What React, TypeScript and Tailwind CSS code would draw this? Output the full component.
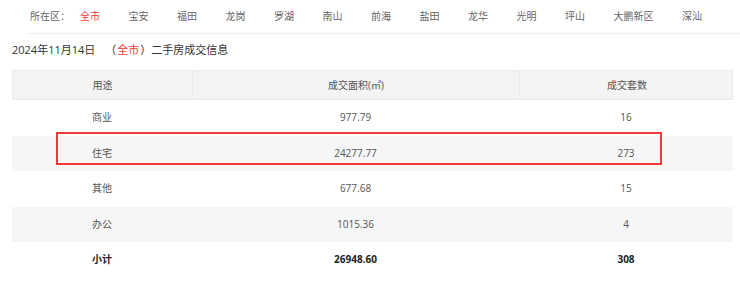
import React from "react";

const districts = ["全市", "宝安", "福田", "龙岗", "罗湖", "南山", "前海", "盐田", "龙华", "光明", "坪山", "大鹏新区", "深汕"];

const rows = [
  { use: "商业", area: "977.79", count: "16" },
  { use: "住宅", area: "24277.77", count: "273" },
  { use: "其他", area: "677.68", count: "15" },
  { use: "办公", area: "1015.36", count: "4" },
];

export default function App() {
  return (
    <div
      className="w-[740px] h-[287px] bg-white text-[#555] overflow-hidden"
      style={{ fontFamily: '"Open Sans", "Noto Sans CJK SC", sans-serif' }}
    >
      <div className="ml-[28px] h-[34px] border-b border-[#ececec] flex items-center text-[10px] text-[#666]">
        <span className="ml-[2px] w-[40px]">所在区：</span>
        <div className="ml-[10px] flex gap-[28.5px]">
          {districts.map((d, i) => (
            <span key={d} className={i === 0 ? "text-[#f23a3a]" : ""}>
              {d}
            </span>
          ))}
        </div>
      </div>
      <div className="ml-[12px] mt-[8px] h-[16px] flex items-center text-[11px] text-[#333]">
        <span>2024年11月14日</span>
        <span className="ml-[10px]">（</span>
        <span className="ml-[1px] text-[#f23a3a]">全市</span>
        <span className="ml-[1px]">）二手房成交信息</span>
      </div>
      <div className="relative ml-[12px] mt-[12px] w-[721px]">
        <div className="grid grid-cols-[180px_327px_214px] h-[30px] bg-[#f4f4f4] border border-[#ebebeb] text-[10px] text-[#555]">
          <div className="flex items-center justify-center border-r border-[#ebebeb]">用途</div>
          <div className="flex items-center justify-center border-r border-[#ebebeb]">成交面积(㎡)</div>
          <div className="flex items-center justify-center">成交套数</div>
        </div>
        {rows.map((r, i) => (
          <div
            key={r.use}
            className={`grid grid-cols-[180px_327px_214px] h-[35.5px] text-[10px] text-[#555] ${i % 2 === 1 ? "bg-[#f6f6f6]" : "bg-white"}`}
          >
            <div className="flex items-center justify-center">{r.use}</div>
            <div className="flex items-center justify-center">{r.area}</div>
            <div className="flex items-center justify-center">{r.count}</div>
          </div>
        ))}
        <div className="grid grid-cols-[180px_327px_214px] h-[35.5px] text-[10px] font-bold text-[#222]">
          <div className="flex items-center justify-center">小计</div>
          <div className="flex items-center justify-center">26948.60</div>
          <div className="flex items-center justify-center">308</div>
        </div>
        <div className="absolute left-[44px] top-[62px] w-[606px] h-[33px] border-2 border-[#f03a3a] pointer-events-none" />
      </div>
    </div>
  );
}
